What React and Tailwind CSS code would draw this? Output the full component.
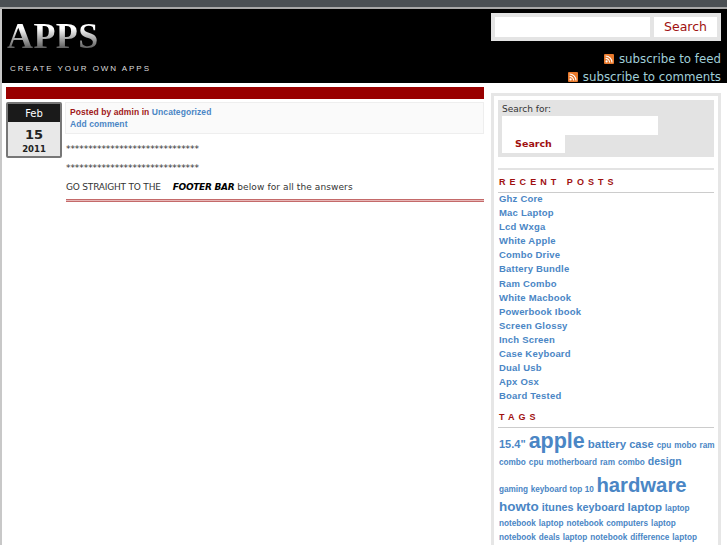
const recentPosts = [
  "Ghz Core", "Mac Laptop", "Lcd Wxga", "White Apple", "Combo Drive", "Battery Bundle", "Ram Combo",
  "White Macbook", "Powerbook Ibook", "Screen Glossy", "Inch Screen", "Case Keyboard", "Dual Usb", "Apx Osx", "Board Tested",
];

const RssIcon = () => (
  <svg width="10" height="10" viewBox="0 0 10 10" className="shrink-0">
    <rect width="10" height="10" rx="1" fill="#e8792c" />
    <circle cx="2.6" cy="7.4" r="1.1" fill="#fff" />
    <path d="M1.6 4.4a4 4 0 0 1 4 4M1.6 2a6.4 6.4 0 0 1 6.4 6.4" stroke="#fff" strokeWidth="1.1" fill="none" />
  </svg>
);

const Tag = ({ className, children }) => <a className={className}>{children}</a>;

export default function App() {
  return (
    <div className="h-[545px] w-[727px] overflow-hidden bg-white font-['DejaVu_Sans',sans-serif]">
      <div className="h-[9px] border-b-2 border-[#a8a8a8] bg-[#4b5054]" />
      <div className="border-l-2 border-[#c8c8c8]">
        <header className="flex h-[74px] justify-between bg-black">
          <div className="pl-[5px]">
            <h1 className="mt-[8px] bg-gradient-to-b from-white from-30% to-[#555] to-85% bg-clip-text font-['Liberation_Serif',serif] text-[36px] leading-[38px] font-bold tracking-[0.4px] text-transparent">
              APPS
            </h1>
            <p className="mt-[9px] pl-[3px] font-['Liberation_Sans',sans-serif] text-[8px] leading-[10px] tracking-[1.95px] text-[#ddd]">
              CREATE YOUR OWN APPS
            </p>
          </div>
          <div className="flex w-[236px] flex-col items-end pr-[6px]">
            <div className="mt-[4px] flex h-[29px] w-[230px] gap-[4px] bg-[#e4e4e4] p-[4px]">
              <div className="w-[155px] bg-white" />
              <button className="w-[63px] bg-white pt-px text-[12.5px] text-[#a01010]">Search</button>
            </div>
            <a className="mt-[10px] flex items-center gap-[5px] text-[11.8px] leading-[17px] text-[#a0cfd8]">
              <RssIcon />subscribe to feed
            </a>
            <a className="mt-px flex items-center gap-[5px] text-[11.8px] leading-[17px] text-[#a0cfd8]">
              <RssIcon />subscribe to comments
            </a>
          </div>
        </header>

        <div className="flex pl-1 pt-[4px]">
          <main className="w-[478px]">
            <div className="h-[12px] bg-[#990000]" />
            <div className="mt-[3px] flex gap-[3px]">
              <div className="h-[56px] w-[56px] shrink-0 rounded-[2px] border-2 border-[#777] bg-[#e8e8e8] text-center text-[#222]">
                <div className="h-[18px] bg-[#1a1a1a] text-[10px] leading-[19px] text-white">Feb</div>
                <div className="mt-[5px] text-[13px] leading-[16px] font-bold">15</div>
                <div className="mt-px text-[8.5px] leading-[11px] font-bold">2011</div>
              </div>
              <div className="min-w-0 flex-1">
                <div className="h-[32px] border border-[#eeeeee] bg-[#fafafa] pt-[4px] pl-[4px] font-['Liberation_Sans',sans-serif] text-[8.5px] leading-[11.5px] font-bold tracking-[0.08px]">
                  <div><span className="text-[#a01818]">Posted by admin in</span> <a className="text-[#4a86c5]">Uncategorized</a></div>
                  <a className="text-[#4a86c5]">Add comment</a>
                </div>
                <div className="mt-[9px] pl-px text-[9px] leading-[12px] tracking-[-0.07px] text-[#333]">******************************</div>
                <div className="mt-[7px] pl-px text-[9px] leading-[12px] tracking-[-0.07px] text-[#333]">******************************</div>
                <div className="mt-[7px] pl-px text-[9px] leading-[12px] text-[#333]">
                  <span className="tracking-[-0.2px]">GO STRAIGHT TO THE</span>
                  <span className="ml-[12px] mr-[3px] font-bold tracking-[-0.3px] text-black italic">FOOTER BAR</span>
                  <span className="tracking-[0.1px]">below for all the answers</span>
                </div>
                <div className="mt-[6px] ml-px h-[3px] border-y border-[#c46a6a] bg-[#e8b8b8]" />
              </div>
            </div>
          </main>

          <aside className="mt-[6px] ml-[7px] h-[460px] w-[230px] border-[3px] border-[#e6e6e6] bg-white px-[4px] pt-[4px]">
            <div className="h-[57px] bg-[#e3e3e3] px-[4px] pt-[2px] text-[9px] leading-[14px] text-[#333]">
              Search for:
              <div className="h-[19px] w-[156px] bg-white" />
              <button className="h-[18px] w-[63px] bg-white text-[9.5px] font-bold text-[#a01010]">Search</button>
            </div>
            <div className="mt-[11px] border-t-2 border-[#e3e3e3]" />
            <h2 className="mt-[6px] border-b border-[#ccc] pb-[3px] pl-px font-['Liberation_Sans',sans-serif] text-[9px] leading-[13px] font-bold tracking-[4.05px] text-[#a01010]">
              RECENT POSTS
            </h2>
            <ul className="-mt-px pl-px font-['Liberation_Sans',sans-serif] text-[9.5px] leading-[14.1px] font-bold tracking-[0.2px] text-[#4a86c5]">
              {recentPosts.map((post) => <li key={post}>{post}</li>)}
            </ul>
            <h2 className="mt-[8px] border-b border-[#ccc] pb-[3px] pl-px font-['Liberation_Sans',sans-serif] text-[9px] leading-[13px] font-bold tracking-[4.05px] text-[#a01010]">
              TAGS
            </h2>
            <div className="-mt-[3px] pl-px font-['Liberation_Sans',sans-serif] font-bold text-[#4a86c5]">
              <div className="flex h-[29px] items-baseline gap-[3px] whitespace-nowrap">
                <Tag className="text-[11px]">15.4"</Tag>
                <Tag className="text-[21.5px]">apple</Tag>
                <Tag className="text-[11.5px]">battery</Tag>
                <Tag className="text-[11px]">case</Tag>
                <Tag className="text-[8.2px]">cpu</Tag>
                <Tag className="text-[8.2px]">mobo</Tag>
                <Tag className="text-[8.2px]">ram</Tag>
              </div>
              <div className="flex h-[16px] items-baseline gap-[3px] whitespace-nowrap">
                <Tag className="text-[8.2px]">combo</Tag>
                <Tag className="text-[8.2px]">cpu</Tag>
                <Tag className="text-[8.2px]">motherboard</Tag>
                <Tag className="text-[8.2px]">ram</Tag>
                <Tag className="text-[8.2px]">combo</Tag>
                <Tag className="text-[10.5px]">design</Tag>
              </div>
              <div className="flex h-[27px] items-baseline gap-[2.5px] whitespace-nowrap">
                <Tag className="text-[8.2px]">gaming</Tag>
                <Tag className="text-[8.2px]">keyboard</Tag>
                <Tag className="text-[8.2px]">top</Tag>
                <Tag className="text-[8.2px]">10</Tag>
                <Tag className="text-[20.3px]">hardware</Tag>
              </div>
              <div className="flex h-[21px] items-baseline gap-[3px] whitespace-nowrap">
                <Tag className="text-[13.5px]">howto</Tag>
                <Tag className="text-[10.8px]">itunes</Tag>
                <Tag className="text-[10.8px]">keyboard</Tag>
                <Tag className="text-[11.5px]">laptop</Tag>
                <Tag className="text-[8.2px]">laptop</Tag>
              </div>
              <div className="flex h-[14px] items-baseline gap-[3px] text-[8.2px] whitespace-nowrap">
                <Tag>notebook</Tag><Tag>laptop</Tag><Tag>notebook</Tag><Tag>computers</Tag><Tag>laptop</Tag>
              </div>
              <div className="flex h-[14px] items-baseline gap-[3px] text-[8.2px] whitespace-nowrap">
                <Tag>notebook</Tag><Tag>deals</Tag><Tag>laptop</Tag><Tag>notebook</Tag><Tag>difference</Tag><Tag>laptop</Tag>
              </div>
            </div>
          </aside>
        </div>
      </div>
    </div>
  );
}
